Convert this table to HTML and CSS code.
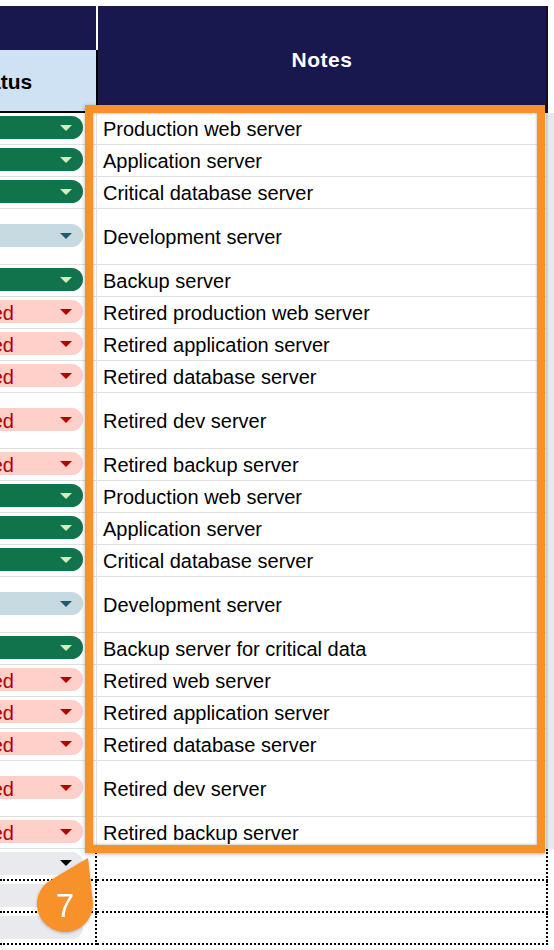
FILE: index.html
```html
<!DOCTYPE html>
<html>
<head>
<meta charset="utf-8">
<link rel="stylesheet" href="styles.css">
</head>
<body>
<div class="sheet">
  <div class="head">
    <div class="hcol1">
      <div class="h-top"></div>
      <div class="h-status"><span>Status</span></div>
    </div>
    <div class="h-sep"><div class="sep-top"></div><div class="sep-bot"></div></div>
    <div class="h-notes">Notes</div>
    <div class="h-edge"></div>
    <div class="gutter"></div>
  </div>
  <div class="rows">
    <div class="row"><div class="c1"><span class="chip green"><span></span><i class="arr"></i></span></div><div class="c2">Production web server</div><div class="gutter"></div></div>
    <div class="row"><div class="c1"><span class="chip green"><span></span><i class="arr"></i></span></div><div class="c2">Application server</div><div class="gutter"></div></div>
    <div class="row"><div class="c1"><span class="chip green"><span></span><i class="arr"></i></span></div><div class="c2">Critical database server</div><div class="gutter"></div></div>
    <div class="row tall"><div class="c1"><span class="chip blue"><span></span><i class="arr"></i></span></div><div class="c2">Development server</div><div class="gutter"></div></div>
    <div class="row"><div class="c1"><span class="chip green"><span></span><i class="arr"></i></span></div><div class="c2">Backup server</div><div class="gutter"></div></div>
    <div class="row"><div class="c1"><span class="chip red"><span>Retired</span><i class="arr"></i></span></div><div class="c2">Retired production web server</div><div class="gutter"></div></div>
    <div class="row"><div class="c1"><span class="chip red"><span>Retired</span><i class="arr"></i></span></div><div class="c2">Retired application server</div><div class="gutter"></div></div>
    <div class="row"><div class="c1"><span class="chip red"><span>Retired</span><i class="arr"></i></span></div><div class="c2">Retired database server</div><div class="gutter"></div></div>
    <div class="row tall"><div class="c1"><span class="chip red"><span>Retired</span><i class="arr"></i></span></div><div class="c2">Retired dev server</div><div class="gutter"></div></div>
    <div class="row"><div class="c1"><span class="chip red"><span>Retired</span><i class="arr"></i></span></div><div class="c2">Retired backup server</div><div class="gutter"></div></div>
    <div class="row"><div class="c1"><span class="chip green"><span></span><i class="arr"></i></span></div><div class="c2">Production web server</div><div class="gutter"></div></div>
    <div class="row"><div class="c1"><span class="chip green"><span></span><i class="arr"></i></span></div><div class="c2">Application server</div><div class="gutter"></div></div>
    <div class="row"><div class="c1"><span class="chip green"><span></span><i class="arr"></i></span></div><div class="c2">Critical database server</div><div class="gutter"></div></div>
    <div class="row tall"><div class="c1"><span class="chip blue"><span></span><i class="arr"></i></span></div><div class="c2">Development server</div><div class="gutter"></div></div>
    <div class="row"><div class="c1"><span class="chip green"><span></span><i class="arr"></i></span></div><div class="c2">Backup server for critical data</div><div class="gutter"></div></div>
    <div class="row"><div class="c1"><span class="chip red"><span>Retired</span><i class="arr"></i></span></div><div class="c2">Retired web server</div><div class="gutter"></div></div>
    <div class="row"><div class="c1"><span class="chip red"><span>Retired</span><i class="arr"></i></span></div><div class="c2">Retired application server</div><div class="gutter"></div></div>
    <div class="row"><div class="c1"><span class="chip red"><span>Retired</span><i class="arr"></i></span></div><div class="c2">Retired database server</div><div class="gutter"></div></div>
    <div class="row tall"><div class="c1"><span class="chip red"><span>Retired</span><i class="arr"></i></span></div><div class="c2">Retired dev server</div><div class="gutter"></div></div>
    <div class="row"><div class="c1"><span class="chip red"><span>Retired</span><i class="arr"></i></span></div><div class="c2">Retired backup server</div><div class="gutter"></div></div>
    <div class="row dot"><div class="c1"><span class="chip gray"><span></span><i class="arr"></i></span></div><div class="c2"></div><div class="gutter"></div></div>
    <div class="row dot"><div class="c1"><span class="chip gray"><span></span><i class="arr"></i></span></div><div class="c2"></div><div class="gutter"></div></div>
    <div class="row dot"><div class="c1"><span class="chip gray"><span></span><i class="arr"></i></span></div><div class="c2"></div><div class="gutter"></div></div>
  </div>
  <div class="frame"></div>
  <svg class="marker" width="70" height="90" viewBox="0 0 70 90">
    <path d="M58 8 L62.8 50.9 A28 28 0 1 1 20.8 29.9 Z" fill="#f7922a"/>
    <text x="35" y="67" text-anchor="middle" class="marker-num">7</text>
  </svg>
</div>
</body>
</html>
```

FILE: styles.css
```css
* { box-sizing: border-box; margin: 0; padding: 0; }
html, body { width: 554px; height: 950px; overflow: hidden; background: #fff; }
body { font-family: "Liberation Sans", Arial, sans-serif; color: #000; }

.sheet { position: relative; padding-top: 6px; }

.head { display: flex; height: 107px; }
.hcol1 { width: 96px; display: flex; flex-direction: column; }
.h-top { height: 44px; background: #18184f; }
.h-status {
  flex: 1; background: #cfe2f3; border-bottom: 2px solid #000;
  display: flex; align-items: center; overflow: hidden; white-space: nowrap;
  font-weight: 700; font-size: 21px; padding-top: 3px;
}
.h-status span { margin-left: -32px; }
.h-sep { width: 2px; display: flex; flex-direction: column; }
.sep-top { height: 44px; background: #fff; }
.sep-bot { flex: 1; background: #000; }
.h-notes {
  width: 448px; background: #18184f; color: #fff;
  font-weight: 700; font-size: 21px; letter-spacing: 0.5px;
  display: flex; align-items: center; justify-content: center;
}
.h-edge { width: 2px; background: #111; }
.gutter { flex: 1; background: #e9e9e9; }
.head .gutter { background: #fff; }

.row { display: flex; height: 32px; }
.row.tall { height: 56px; }
.c1 {
  width: 97px; border-right: 1px solid #e0e0e0; border-bottom: 1px solid #e0e0e0;
  display: flex; align-items: center; overflow: hidden;
}
.c2 {
  width: 451px; border-right: 2px solid #dadada; border-bottom: 1px solid #e0e0e0;
  display: flex; align-items: center; padding-left: 6px; padding-top: 2px;
  font-size: 20px; white-space: nowrap;
}
.row.dot .c1 { border-right: 2px dotted #000; border-bottom: 2px dotted #000; }
.row.dot .c2 { border-right: 2px dotted #000; border-bottom: 2px dotted #000; }
.row.dot .gutter { background: #fff; }

.chip {
  flex-shrink: 0; margin-left: -60px; margin-bottom: 2px; width: 143px; height: 23px;
  border-radius: 12px; display: flex; align-items: center; justify-content: space-between;
  padding: 2px 11px 0 9.5px; font-size: 20px; line-height: 1; white-space: nowrap;
}
.arr {
  width: 0; height: 0; border-left: 6px solid transparent; border-right: 6px solid transparent;
  border-top: 6px solid currentColor; margin-top: -2px;
}
.green { background: #11734b; color: #d4edbc; }
.blue { background: #c6dbe1; color: #215a6c; }
.red { background: #ffcfc9; color: #b10202; }
.gray { background: #e8eaed; color: #000; }

.frame {
  position: absolute; left: 85px; top: 105px; width: 460px; height: 748px;
  border: 8px solid #f7922a;
  box-shadow: 0 1px 4px rgba(0,0,0,0.3), inset 0 0 3px rgba(0,0,0,0.35);
}
.marker {
  position: absolute; left: 30px; top: 850px;
  filter: drop-shadow(0 1px 1.5px rgba(0,0,0,0.25));
}
.marker-num { font-family: "Liberation Sans", Arial, sans-serif; font-size: 33px; fill: #fff; }
```
